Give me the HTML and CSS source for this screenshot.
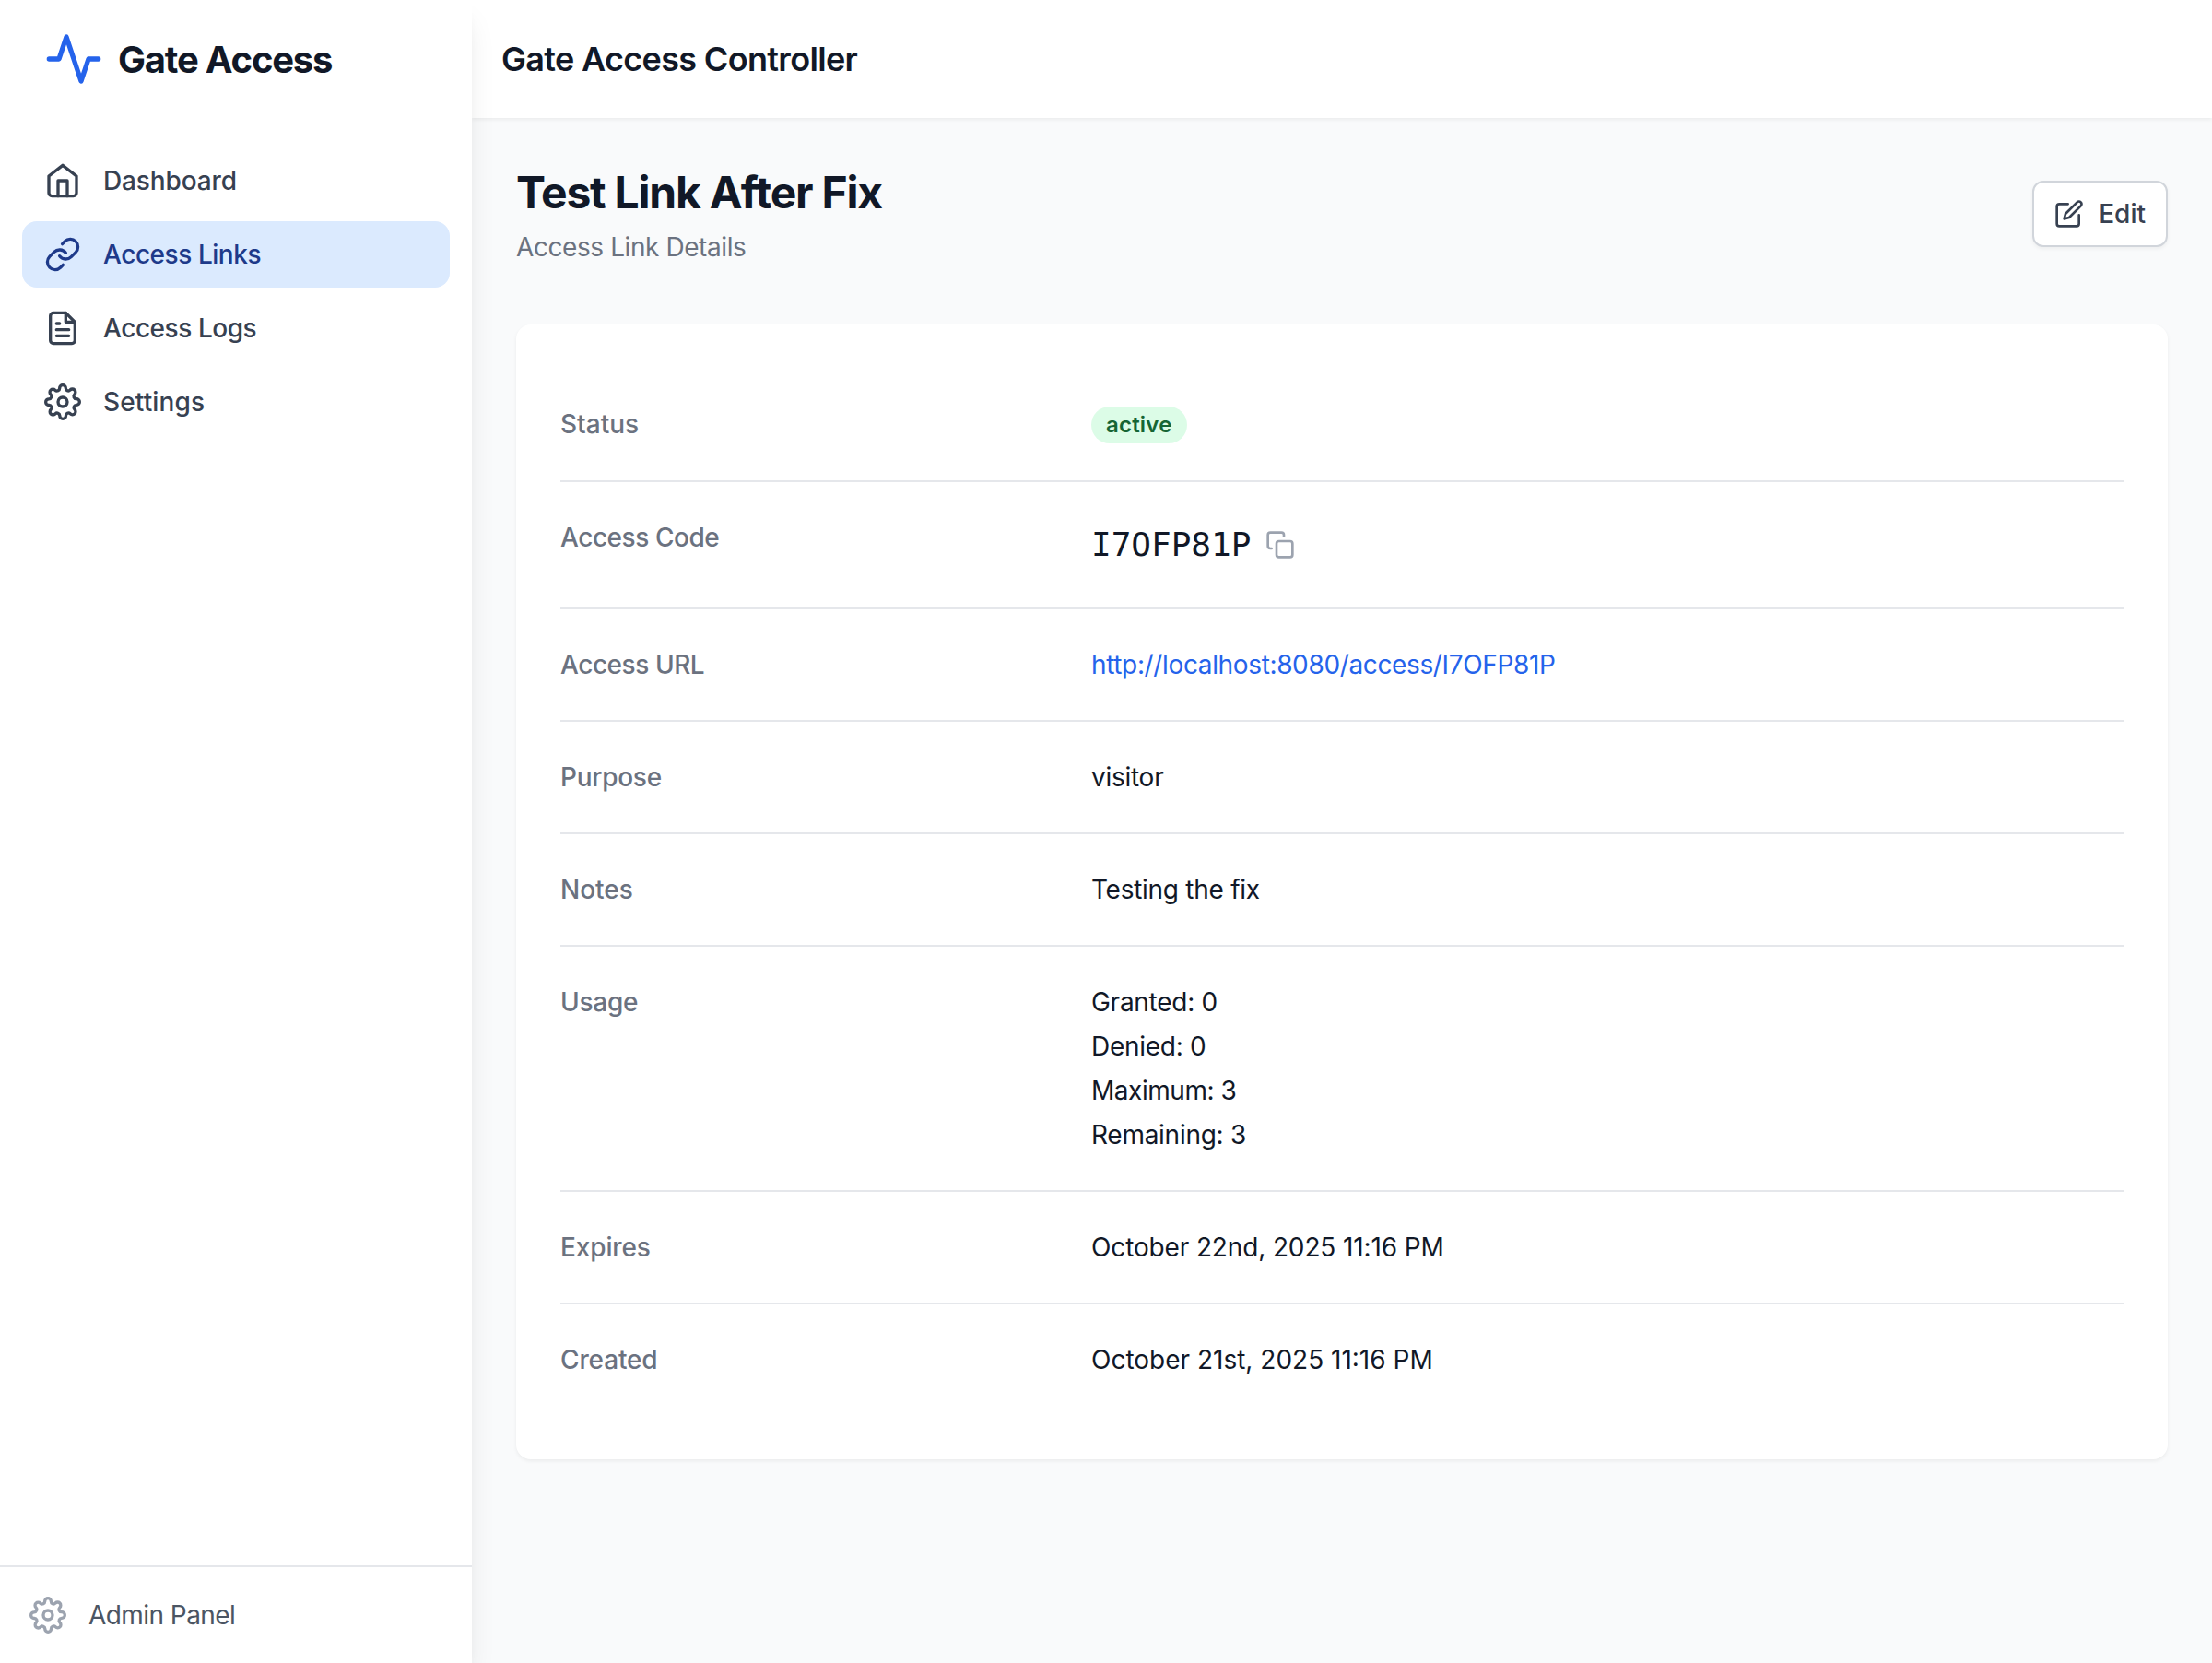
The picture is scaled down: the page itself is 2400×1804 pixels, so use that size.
FILE: index.html
```html
<!DOCTYPE html>
<html lang="en">
<head>
<meta charset="utf-8">
<title>Gate Access Controller</title>
<link rel="stylesheet" href="styles.css">
</head>
<body>
<svg class="sprite" aria-hidden="true">
  <symbol id="gear" viewBox="0 0 24 24"><circle cx="12" cy="12" r="3"/><path d="M19.4 15a1.65 1.65 0 0 0 .33 1.82l.06.06a2 2 0 0 1 0 2.83 2 2 0 0 1-2.83 0l-.06-.06a1.65 1.65 0 0 0-1.82-.33 1.65 1.65 0 0 0-1 1.51V21a2 2 0 0 1-2 2 2 2 0 0 1-2-2v-.09A1.65 1.65 0 0 0 9 19.4a1.65 1.65 0 0 0-1.82.33l-.06.06a2 2 0 0 1-2.83 0 2 2 0 0 1 0-2.83l.06-.06a1.65 1.65 0 0 0 .33-1.82 1.65 1.65 0 0 0-1.51-1H3a2 2 0 0 1-2-2 2 2 0 0 1 2-2h.09A1.65 1.65 0 0 0 4.6 9a1.65 1.65 0 0 0-.33-1.82l-.06-.06a2 2 0 0 1 0-2.83 2 2 0 0 1 2.83 0l.06.06a1.65 1.65 0 0 0 1.82.33H9a1.65 1.65 0 0 0 1-1.51V3a2 2 0 0 1 2-2 2 2 0 0 1 2 2v.09a1.65 1.65 0 0 0 1 1.51 1.65 1.65 0 0 0 1.82-.33l.06-.06a2 2 0 0 1 2.83 0 2 2 0 0 1 0 2.83l-.06.06a1.65 1.65 0 0 0-.33 1.82V9a1.65 1.65 0 0 0 1.51 1H21a2 2 0 0 1 2 2 2 2 0 0 1-2 2h-.09a1.65 1.65 0 0 0-1.51 1z"/></symbol>
</svg>
<div class="app">
  <aside class="sidebar">
    <div class="brand">
      <svg class="icon brand-icon" viewBox="0 0 24 24"><path d="M22 12h-4l-3 9L9 3l-3 9H2"/></svg>
      <span class="brand-name">Gate Access</span>
    </div>
    <nav class="nav">
      <a class="nav-item"><svg class="icon nav-icon" viewBox="0 0 24 24"><path d="m3 9 9-7 9 7v11a2 2 0 0 1-2 2H5a2 2 0 0 1-2-2z"/><path d="M9 22V12h6v10"/></svg><span class="snug">Dashboard</span></a>
      <a class="nav-item active"><svg class="icon nav-icon" viewBox="0 0 24 24"><path d="M10 13a5 5 0 0 0 7.54.54l3-3a5 5 0 0 0-7.07-7.07l-1.72 1.71"/><path d="M14 11a5 5 0 0 0-7.54-.54l-3 3a5 5 0 0 0 7.07 7.07l1.71-1.71"/></svg><span class="tighter">Access Links</span></a>
      <a class="nav-item"><svg class="icon nav-icon" viewBox="0 0 24 24"><path d="M14 2H6a2 2 0 0 0-2 2v16a2 2 0 0 0 2 2h12a2 2 0 0 0 2-2V8z"/><path d="M14 2v6h6M16 13H8M16 17H8M10 9H8"/></svg><span class="tighter">Access Logs</span></a>
      <a class="nav-item"><svg class="icon nav-icon"><use href="#gear"/></svg><span class="loose">Settings</span></a>
    </nav>
    <a class="admin"><svg class="icon admin-icon"><use href="#gear"/></svg><span class="tightest">Admin Panel</span></a>
  </aside>
  <div class="main">
    <header class="topbar"><h2>Gate Access Controller</h2></header>
    <main class="content">
      <div class="page-head">
        <div>
          <h1>Test Link After Fix</h1>
          <p class="subtitle">Access Link Details</p>
        </div>
        <button class="edit"><svg class="icon edit-icon" viewBox="0 0 24 24"><path d="M11 4H4a2 2 0 0 0-2 2v14a2 2 0 0 0 2 2h14a2 2 0 0 0 2-2v-7"/><path d="M18.5 2.5a2.121 2.121 0 0 1 3 3L12 15l-4 1 1-4 9.5-9.5z"/></svg><span>Edit</span></button>
      </div>
      <dl class="card">
        <div class="row status-row"><dt>Status</dt><dd><span class="badge">active</span></dd></div>
        <div class="row"><dt class="tighter">Access Code</dt><dd class="code"><code>I7OFP81P</code><svg class="icon copy-icon" viewBox="0 0 24 24"><rect x="9" y="9" width="13" height="13" rx="2"/><path d="M5 15H4a2 2 0 0 1-2-2V4a2 2 0 0 1 2-2h9a2 2 0 0 1 2 2v1"/></svg></dd></div>
        <div class="row"><dt class="tighter">Access URL</dt><dd><a class="link">http://localhost:8080/access/I7OFP81P</a></dd></div>
        <div class="row"><dt class="tight">Purpose</dt><dd class="tight">visitor</dd></div>
        <div class="row"><dt>Notes</dt><dd class="tight">Testing the fix</dd></div>
        <div class="row"><dt class="tight">Usage</dt><dd class="usage"><div class="tight">Granted: 0</div><div class="tight">Denied: 0</div><div class="tighter">Maximum: 3</div><div class="tight">Remaining: 3</div></dd></div>
        <div class="row"><dt class="snug">Expires</dt><dd class="snug">October 22nd, 2025 11:16 PM</dd></div>
        <div class="row"><dt class="snug">Created</dt><dd>October 21st, 2025 11:16 PM</dd></div>
      </dl>
    </main>
  </div>
</div>
</body>
</html>
```
FILE: styles.css
```css
* { box-sizing: border-box; margin: 0; padding: 0; }
body { font-family: Inter, "Liberation Sans", sans-serif; font-size: 28px; line-height: 40px; color: #111827; background: #f9fafb; }
.sprite { display: none; }
.app { display: flex; height: 1804px; overflow: hidden; }
.icon { flex: none; fill: none; stroke: currentColor; stroke-width: 2; stroke-linecap: round; stroke-linejoin: round; }

/* Tracking steps */
.loose { letter-spacing: .12px; }
.snug { letter-spacing: -.13px; }
.tight { letter-spacing: -.27px; }
.tighter { letter-spacing: -.45px; }
.tightest { letter-spacing: -.56px; }

.sidebar { position: relative; z-index: 1; width: 512px; flex: none; display: flex; flex-direction: column; background: #fff; box-shadow: 0 20px 30px -6px rgb(0 0 0 / .1), 0 8px 12px -8px rgb(0 0 0 / .1); }
.brand { display: flex; align-items: center; gap: 16px; height: 128px; padding: 0 48px; }
.brand-icon { width: 64px; height: 64px; color: #2563eb; }
.brand-name { padding-top: 2px; font-size: 40px; font-weight: 700; letter-spacing: -1.2px; }
.nav { flex: 1; display: flex; flex-direction: column; gap: 8px; padding: 32px 24px; }
.nav-item { display: flex; align-items: center; gap: 24px; height: 72px; padding: 0 24px; border-radius: 16px; font-weight: 500; color: #374151; }
.nav-item.active { background: #dbeafe; color: #1e3a8a; }
.nav-icon, .admin-icon { width: 40px; height: 40px; }
.admin { display: flex; align-items: center; gap: 24px; height: 106px; padding: 0 32px; border-top: 2px solid #e5e7eb; color: #4b5563; }
.admin-icon { color: #9ca3af; }

.main { flex: 1; display: flex; flex-direction: column; }
.topbar { display: flex; align-items: center; height: 128px; padding: 0 32px; background: #fff; box-shadow: 0 2px 4px rgb(0 0 0 / .06); }
.topbar h2 { font-size: 36px; font-weight: 600; letter-spacing: -.67px; }
.content { flex: 1; padding: 48px; }
.page-head { display: flex; justify-content: space-between; align-items: center; height: 112px; }
h1 { padding-top: 1px; font-size: 48px; line-height: 64px; font-weight: 700; letter-spacing: -1.23px; }
.subtitle { margin-top: 7px; color: #6b7280; letter-spacing: -.42px; }
.edit { display: flex; align-items: center; gap: 16px; height: 72px; padding: 0 22px; border: 2px solid #d1d5db; border-radius: 12px; background: #fff; box-shadow: 0 2px 4px rgb(0 0 0 / .05); font: inherit; font-weight: 500; color: #374151; }
.edit-icon { width: 32px; height: 32px; }

.card { margin-top: 64px; padding: 48px; border-radius: 16px; background: #fff; box-shadow: 0 2px 4px rgb(0 0 0 / .06); }
.row { display: grid; grid-template-columns: 544px 1fr; column-gap: 32px; padding: 40px 0; }
.row + .row { border-top: 2px solid #e5e7eb; }
.status-row { height: 121px; }
dt { font-weight: 500; color: #6b7280; }
.badge { display: flex; width: max-content; height: 40px; margin-top: 1px; padding: 0 16px; border-radius: 20px; background: #dcfce7; font-size: 24px; font-weight: 600; letter-spacing: .2px; color: #166534; }
.code { display: flex; align-items: center; gap: 16px; height: 56px; }
code { font-family: "DejaVu Sans Mono", monospace; font-size: 36px; }
.copy-icon { width: 32px; height: 32px; color: #9ca3af; }
.link { color: #2563eb; letter-spacing: -.36px; }
.usage { display: grid; gap: 8px; }
```
